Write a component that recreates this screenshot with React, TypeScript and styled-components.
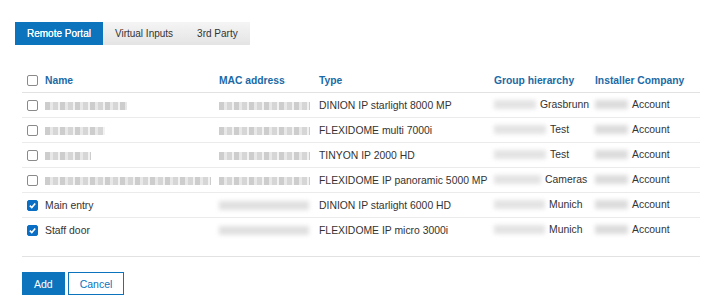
import React from "react";
import styled, { createGlobalStyle } from "styled-components";

const GlobalStyle = createGlobalStyle`
  body {
    margin: 0;
    background: #ffffff;
    font-family: "Liberation Sans", Arial, sans-serif;
    font-size: 10.4px;
    color: #333333;
  }
`;

const Page = styled.div`
  padding: 22px 10px 0 15px;
`;

const TabBar = styled.div`
  display: inline-flex;
  height: 23px;
  background: linear-gradient(#f5f5f5, #e4e4e4);
`;

const Tab = styled.div<{ $active?: boolean }>`
  display: flex;
  align-items: center;
  padding: 0 12px;
  height: 100%;
  white-space: nowrap;
  font-size: 10px;
  color: ${(p) => (p.$active ? "#ffffff" : "#333333")};
  background: ${(p) => (p.$active ? "#0b74bd" : "transparent")};
  text-shadow: ${(p) => (p.$active ? "0 0 0.4px #ffffff" : "none")};
`;

const Panel = styled.div`
  margin: 23px 0 0 7px;
  width: 678px;
`;

const Table = styled.table`
  width: 100%;
  border-collapse: collapse;
  table-layout: fixed;
`;

const Th = styled.th<{ $w: number }>`
  width: ${(p) => p.$w}px;
  text-align: left;
  font-weight: bold;
  font-size: 10.3px;
  color: #1b6aa6;
  height: 24px;
  padding: 0;
  border-bottom: 1px solid #e2e2e2;
  vertical-align: middle;
`;

const Td = styled.td`
  height: 24px;
  padding: 0;
  border-bottom: 1px solid #ebebeb;
  white-space: nowrap;
  vertical-align: middle;
`;

const LastRow = styled.tr`
  & > td {
    border-bottom: none;
  }
`;

const Box = styled.span<{ $checked?: boolean }>`
  display: inline-flex;
  align-items: center;
  justify-content: center;
  box-sizing: border-box;
  width: 11px;
  height: 11px;
  margin-left: 5px;
  border-radius: 2px;
  border: 1px solid ${(p) => (p.$checked ? "#0a6fc4" : "#8a8a8a")};
  background: ${(p) => (p.$checked ? "#0a6fc4" : "#ffffff")};
  vertical-align: middle;
`;

const Blur = styled.span<{ $w: number; $tone?: string }>`
  display: inline-block;
  width: ${(p) => p.$w}px;
  height: 9px;
  background: ${(p) => p.$tone ?? "#d9d9d9"};
  filter: blur(2px);
  vertical-align: middle;
  margin-right: 4px;
`;

const Mosaic = styled.span<{ $w: number }>`
  display: inline-block;
  width: ${(p) => p.$w}px;
  height: 8px;
  vertical-align: middle;
  background: repeating-linear-gradient(
    90deg,
    #cdcdcd 0 5px,
    #e8e8e8 5px 8px,
    #d6d6d6 8px 13px,
    #f2f2f2 13px 15px
  );
  filter: blur(0.6px);
`;

const Cell = styled.span`
  display: inline-flex;
  align-items: center;
`;

const Footer = styled.div`
  border-top: 1px solid #e2e2e2;
  margin-top: 14px;
  padding-top: 15px;
  display: flex;
  gap: 3px;
`;

const Button = styled.button<{ $primary?: boolean }>`
  height: 23px;
  padding: 0 11px;
  font-family: inherit;
  font-size: 10.5px;
  border: 1px solid #0b74bd;
  color: ${(p) => (p.$primary ? "#ffffff" : "#0b74bd")};
  background: ${(p) => (p.$primary ? "#0b74bd" : "#ffffff")};
  cursor: pointer;
`;

const Check = ({ checked }: { checked?: boolean }) => (
  <Box $checked={checked}>
    {checked && (
      <svg width="9" height="9" viewBox="0 0 10 10">
        <path d="M2 5.2 L4.2 7.3 L8 2.8" fill="none" stroke="#fff" strokeWidth="1.8" />
      </svg>
    )}
  </Box>
);

interface Row {
  name?: string;
  nameBlur?: number;
  macMosaic: boolean;
  type: string;
  groupBlur: number;
  group: string;
  checked: boolean;
}

const rows: Row[] = [
  { nameBlur: 82, macMosaic: true, type: "DINION IP starlight 8000 MP", groupBlur: 42, group: "Grasbrunn", checked: false },
  { nameBlur: 60, macMosaic: true, type: "FLEXIDOME multi 7000i", groupBlur: 52, group: "Test", checked: false },
  { nameBlur: 46, macMosaic: true, type: "TINYON IP 2000 HD", groupBlur: 52, group: "Test", checked: false },
  { nameBlur: 166, macMosaic: true, type: "FLEXIDOME IP panoramic 5000 MP", groupBlur: 47, group: "Cameras", checked: false },
  { name: "Main entry", macMosaic: false, type: "DINION IP starlight 6000 HD", groupBlur: 51, group: "Munich", checked: true },
  { name: "Staff door", macMosaic: false, type: "FLEXIDOME IP micro 3000i", groupBlur: 51, group: "Munich", checked: true },
];

const App = (): JSX.Element => {
  return (
    <Page>
      <GlobalStyle />
      <TabBar>
        <Tab $active>Remote Portal</Tab>
        <Tab>Virtual Inputs</Tab>
        <Tab>3rd Party</Tab>
      </TabBar>
      <Panel>
        <Table>
          <thead>
            <tr>
              <Th $w={23}>
                <Check />
              </Th>
              <Th $w={174}>Name</Th>
              <Th $w={100}>MAC address</Th>
              <Th $w={175}>Type</Th>
              <Th $w={101}>Group hierarchy</Th>
              <Th $w={105}>Installer Company</Th>
            </tr>
          </thead>
          <tbody>
            {rows.map((r, i) => {
              const RowEl = i === rows.length - 1 ? LastRow : "tr";
              return (
                <RowEl key={i}>
                  <Td>
                    <Check checked={r.checked} />
                  </Td>
                  <Td>{r.name ?? <Mosaic $w={r.nameBlur ?? 60} />}</Td>
                  <Td>{r.macMosaic ? <Mosaic $w={91} /> : <Blur $w={90} $tone="#e0e0e0" />}</Td>
                  <Td>{r.type}</Td>
                  <Td>
                    <Cell>
                      <Blur $w={r.groupBlur} $tone="#e3e3e3" />
                      {r.group}
                    </Cell>
                  </Td>
                  <Td>
                    <Cell>
                      <Blur $w={33} $tone="#dcdcdc" />
                      Account
                    </Cell>
                  </Td>
                </RowEl>
              );
            })}
          </tbody>
        </Table>
        <Footer>
          <Button $primary>Add</Button>
          <Button>Cancel</Button>
        </Footer>
      </Panel>
    </Page>
  );
};

export default App;
